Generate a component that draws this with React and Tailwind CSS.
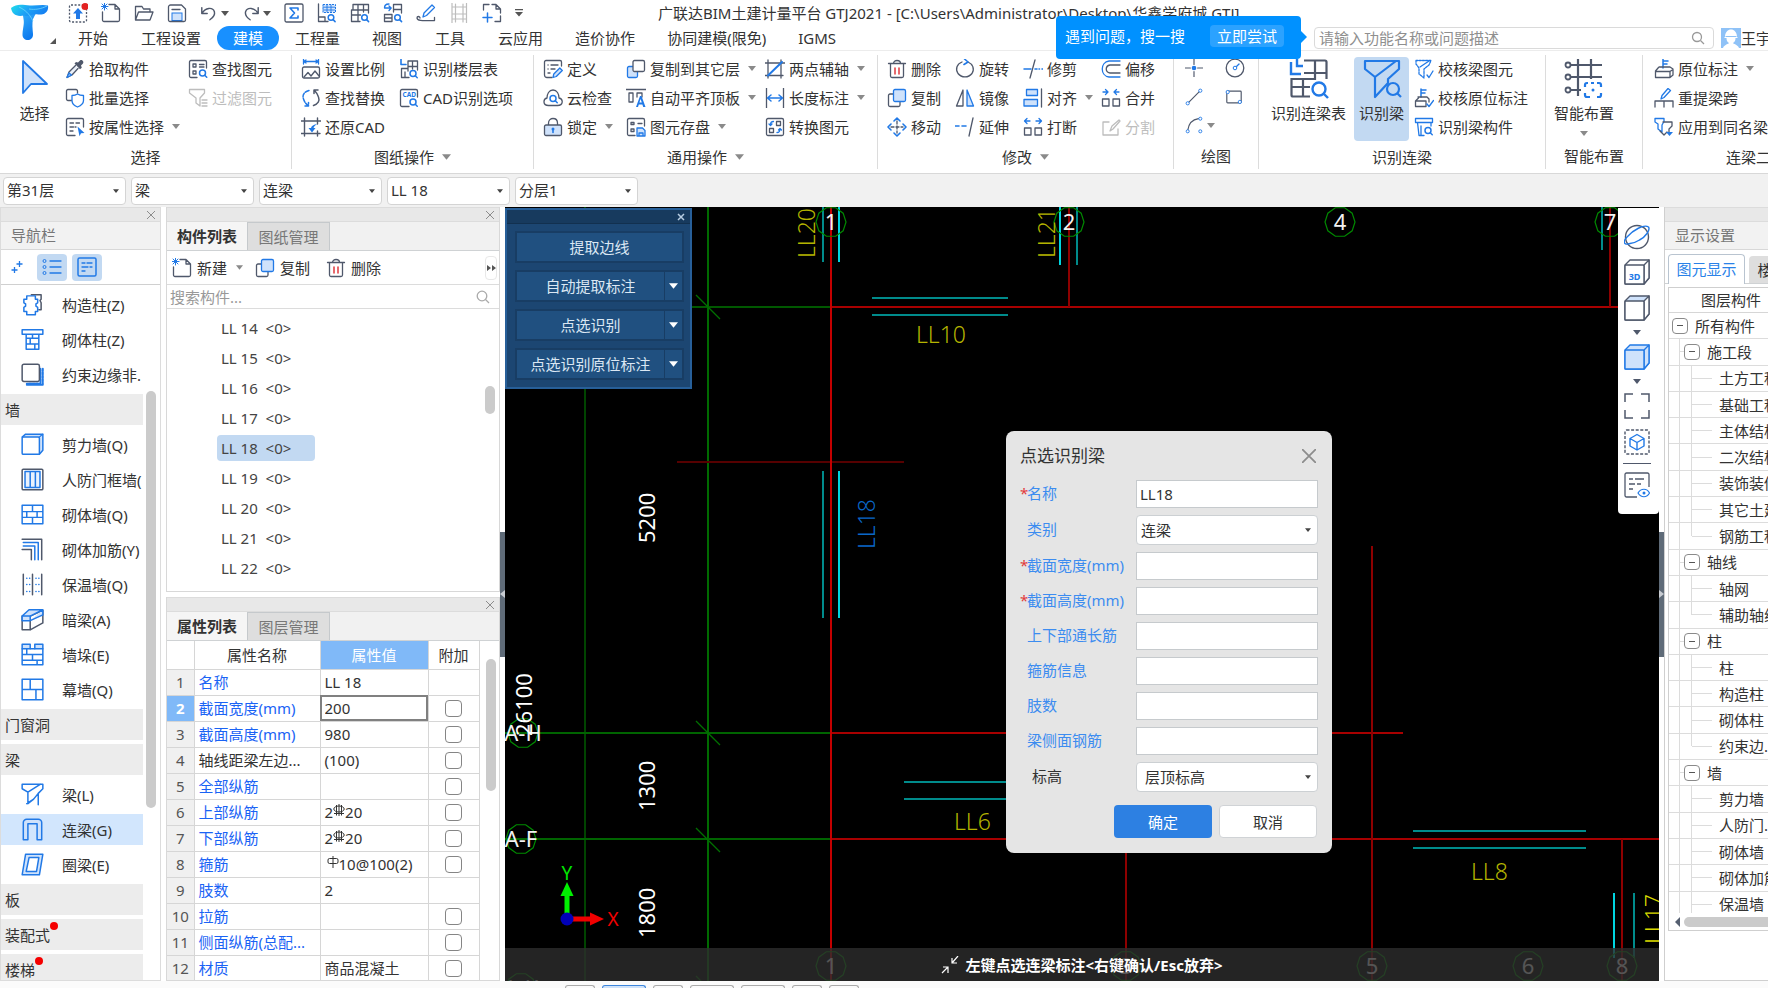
import React from "react";

const G = "#4f586b";
const B = "#2179e6";
const L = "#cfe2fb";
const M = "#bdbdbd";

function P({ d, c = G, f = "none", w = 1.3, dash }) {
  return <path d={d} stroke={c} fill={f} strokeWidth={w} strokeLinecap="round" strokeLinejoin="round" strokeDasharray={dash} />;
}

function Svg({ children, className = "w-5 h-5" }) {
  return (
    <svg viewBox="0 0 20 20" className={"shrink-0 " + className} fill="none" aria-hidden="true">
      {children}
    </svg>
  );
}

function Lens({ x = 14, y = 14, r = 3, w = 1.5 }) {
  return (
    <>
      <circle cx={x} cy={y} r={r} stroke={B} strokeWidth={w} fill="white" />
      <P d={`M${x + r * 0.75} ${y + r * 0.75}l2 2`} c={B} w={w} />
    </>
  );
}

function Caret({ className = "w-2 h-[5px]", color = "#8a8a8a" }) {
  return (
    <svg viewBox="0 0 8 5" className={"shrink-0 " + className} aria-hidden="true">
      <path d="M0 0h8L4 5z" fill={color} />
    </svg>
  );
}

const icons = {
  upload: (
    <>
      <rect x="1.500" y="2" width="17" height="17" rx="1.500" stroke={G} strokeWidth="1.300" strokeDasharray="2 1.600" />
      <path d="M10 5l5 5.500h-3V16H8v-5.500H5z" fill={B} />
      <circle cx="17" cy="3.500" r="3.500" fill="#e32222" />
    </>
  ),
  newDoc: (
    <>
      <P d="M8 1.500h6l4.500 4.500v11a1.500 1.500 0 0 1-1.500 1.500H3A1.500 1.500 0 0 1 1.500 17V9M14 1.500V6h4.500" />
      <P d="M3.500 0v7M0 3.500h7M1 1l5 5M6 1L1 6" c={B} w={1} />
    </>
  ),
  open: (
    <>
      <P d="M1.500 17V3.500H8l1.500 2.500H16v3M1.500 17l3-8H19l-3 8z" />
    </>
  ),
  save: (
    <>
      <rect x="5" y="10" width="10" height="7.500" fill={L} stroke={B} />
      <P d="M3.500 2h11L18.500 6v11a1.500 1.500 0 0 1-1.500 1.500H3A1.500 1.500 0 0 1 1.500 17V4a2 2 0 0 1 2-2zM5 6.500h8" />
    </>
  ),
  undo: <P d="M2 4v6.500h6M2.500 10C6 4 14 3 16 8.500c1 4-2 7-5 9" w={1.6} />,
  redo: <P d="M18 4v6.500h-6M17.500 10C14 4 6 3 4 8.500c-1 4 2 7 5 9" w={1.6} />,
  sum: (
    <>
      <rect x="1" y="1" width="18" height="18" rx="1.500" stroke={G} strokeWidth="1.300" />
      <P d="M14 7V5H6l4.500 5L6 15h8v-2" c={B} w={1.6} />
    </>
  ),
  tableFind: (
    <>
      <P d="M1.500 1v17.500H11M1.500 14H8v4" />
      <rect x="6" y="1.500" width="12.500" height="8" stroke={B} fill={L} strokeDasharray="2 1" />
      <P d="M6 4.200h12M6 7h12M10 2v7M14 2v7" c={B} w={0.9} />
      <Lens x={14} y={14.500} r={2.800} />
    </>
  ),
  gridFind: (
    <>
      <P d="M3 1.500h15.500V10M3 1.500V7H1.500v11.500H10M1.500 12h9M3 7h15.500M8 1.500v17M13.500 1.500V9" />
      <Lens x={14.500} y={14.500} r={2.800} />
    </>
  ),
  blocksFind: (
    <>
      <P d="M10.500 1.500h8V10M10.500 1.500V9M10.500 6.500h8M1.500 18.500h7.500M1.500 18.500v-7H9v7M1.500 15H9" />
      <P d="M6 1C2 1 1.500 3 1.500 5H8M6 3L8.200 5 6 7.500" c={B} />
      <Lens x={14.500} y={14.500} r={2.800} />
    </>
  ),
  penLine: (
    <>
      <P d="M1 15c0-2 3-2 3 0M1 15c0 3.500 8 2.500 17.500 2.500v-3" />
      <P d="M7 14l1-4 8-8 2.500 2.500-8 8z" c={B} />
    </>
  ),
  cols: (
    <>
      <P d="M3 0v20M6.500 1v18M14 1v18M17.500 0v20M3 4h14.500M3 11h14.500M3 16h14.500" c={M} w={1.200} />
    </>
  ),
  pageAdd: (
    <>
      <P d="M1.500 7V1.500H7M10 1.500h4L18.500 6v4M14 1.500V6h4.500M18.500 13v5.500H13" />
      <P d="M5.500 10v9M1 14.500h9" c={B} w={1.500} />
    </>
  ),
  pipette: (
    <>
      <path d="M11 3l2 .5L15 1.500c1.500-1.500 4.500 1 3 3L16 6.500l.8 2.200-1.800 1.500L9.500 4.500z" fill={G} />
      <P d="M10.500 6.500L4 13l-2 5.500L7 16l6-6.500" f="#e9eff8" />
      <P d="M4 14l-2 4.500L6.500 16z" c={B} f={L} />
    </>
  ),
  batch: (
    <>
      <P d="M7 12.500H3A1.500 1.500 0 0 1 1.500 11V3A1.500 1.500 0 0 1 3 1.500h8A1.500 1.500 0 0 1 12.500 3v2" />
      <P d="M7 7.500c2 0 4-.5 5.500-1.500 1.500 1 3.500 1.500 6 1.500v5c0 4-3.500 5.500-6 6.500-2.500-1-5.500-2.500-5.500-6.500z" c={B} f="white" />
    </>
  ),
  attrSelect: (
    <>
      <P d="M10 18.500H3A1.500 1.500 0 0 1 1.500 17V3A1.500 1.500 0 0 1 3 1.500h14A1.500 1.500 0 0 1 18.500 3v7" />
      <P d="M5 6h4M11 6h4.500M5 10h6M5 14h3" dash="3.500 1.500" />
      <path d="M12.500 9.500l7 6.500-3.500.3-1.500 3z" fill={B} />
    </>
  ),
  findEl: (
    <>
      <P d="M9 18.500H3A1.500 1.500 0 0 1 1.500 17V3A1.500 1.500 0 0 1 3 1.500h14A1.500 1.500 0 0 1 18.500 3v6" />
      <P d="M5 5h3v3H5zM5 12h3v3H5zM11.500 5.500H16M11.500 8H16" />
      <Lens x={14.500} y={14} />
    </>
  ),
  filter: (
    <>
      <P d="M1.500 1.500h15V5L12 10v8l-4-3v-5L1.500 5zM14 12h5M14 15h5M14 18h5" c={M} />
    </>
  ),
  scale: (
    <>
      <P d="M2.500 2.500h15M2.500 0v5M17.500 0v5M5 1L2.500 2.500 5 4M15 1l2.500 1.500L15 4" c={B} />
      <rect x="1.500" y="8" width="17" height="11" rx="1.500" stroke={G} strokeWidth="1.300" />
      <P d="M3 18l4-4.500 3 3.500 4-5 4 5" />
    </>
  ),
  floorFind: (
    <>
      <P d="M2 0v5.500h5" c={B} w={1.600} />
      <P d="M9 2h9.500v9M9 2v10M2.500 10.500v8H10M2.500 18.500V9.500H9M9 7.500h9.500M13.500 2v8M6 13v5" />
      <Lens x={14} y={14.500} />
    </>
  ),
  swap: (
    <>
      <P d="M8 2.500C3 4 1 7 2.500 11c.8 2.500 2 4.500 4.500 6.500M4 18h3.500v-3.500" c={B} w={1.500} dash="4 1.500" />
      <P d="M12.500 17.500C17 16 19 13 17.500 9c-.8-2.500-2-4.500-4-6.500M17 2h-4v3.500" w={1.500} />
    </>
  ),
  cad: (
    <>
      <P d="M10 18.500H3A1.500 1.500 0 0 1 1.500 17V3A1.500 1.500 0 0 1 3 1.500h14A1.500 1.500 0 0 1 18.500 3v6" />
      <text x="3.500" y="9" fontSize="6.500" fontWeight="bold" fill={B} fontFamily="Noto Sans">CAD</text>
      <Lens x={14} y={14} />
    </>
  ),
  restore: (
    <>
      <P d="M0 4h20M3.500 1v18M16.500 1v6M0 16.500h19M16.500 14v5" w={1.400} />
      <path d="M16.500 7c-4 .5-6 2-6.500 4H7.500l3.500 4.500 3.500-4.500h-2c.5-2 2-3 4-4z" fill={B} />
    </>
  ),
  define: (
    <>
      <P d="M9 18.500H4A2.500 2.500 0 0 1 1.500 16V3A1.500 1.500 0 0 1 3 1.500h14A1.500 1.500 0 0 1 18.500 3v4M8 6h7M8 10h4M5 6h.1M5 10h.1M5 14h2" />
      <P d="M10 18.500l.8-3.500 6-6 2.500 2.500-6 6z" c={B} f={L} />
    </>
  ),
  cloud: (
    <>
      <P d="M5.500 17.500C-.5 17.500 0 11 4 10c0-4 2-8 6-8s6 4 6 8c4.500 1 4.500 7.500-1.500 7.500z" />
      <Lens x={10} y={10.500} r={3} />
    </>
  ),
  lock: (
    <>
      <P d="M5.500 8V6c0-6 9-6 9 0v2" />
      <rect x="1.500" y="8" width="17" height="10.500" rx="1.500" stroke={G} strokeWidth="1.300" fill={L} />
      <circle cx="10" cy="12" r="1.500" fill={B} />
      <P d="M10 12v3.500" c={B} w={1.600} />
    </>
  ),
  copyLayer: (
    <>
      <rect x="1.500" y="7.500" width="10" height="11" rx="1.500" fill={L} stroke={B} strokeWidth="1.300" />
      <rect x="7" y="1.500" width="11.500" height="11" rx="1.500" fill="white" stroke={G} strokeWidth="1.300" />
    </>
  ),
  alignTop: (
    <>
      <P d="M0 1.500h20M3 5h4v9H3zM11 9V5h5v4" />
      <path d="M10 19l4-11h1.500l4 11h-2.300l-.8-2.500h-3.600L12 19zm3.400-4.500h2.400L14.600 11z" fill={B} />
    </>
  ),
  store: (
    <>
      <P d="M9 18.500H3A1.500 1.500 0 0 1 1.500 17V3A1.500 1.500 0 0 1 3 1.500h14A1.500 1.500 0 0 1 18.500 3v6M5 5.500h3v2H5zM5 12h3v2.500H5zM12 6.500h4" />
      <P d="M11 11h5.500l2.500 2.500V19h-8zM13 19v-3h4v3" c={B} f={L} />
    </>
  ),
  axis2: (
    <>
      <P d="M3 1v18M16 1v18M0 4h20M0 16.500h18" />
      <P d="M3 16.500L17 3" c={B} w={2} />
    </>
  ),
  dim: (
    <>
      <P d="M1.500 0v20M18.500 0v20" />
      <P d="M3 10h14M6 7l-3.500 3L6 13M14 7l3.500 3-3.500 3" c={B} w={1.500} />
    </>
  ),
  convert: (
    <>
      <rect x="1.500" y="1.500" width="17" height="17" rx="1.500" stroke={G} strokeWidth="1.300" />
      <P d="M11.500 4.500h4v4h-4zM4.500 11.500h4v4h-4z" />
      <P d="M8.500 4.500c-2 0-3 1-3 3.500M4 7l1.500 1.500L7 7M12 15.500c2 0 3-1 3-3.500M13.500 13l1.500-1.500 1.500 1.500" c={B} />
    </>
  ),
  trash: (
    <>
      <P d="M1.500 4.500h17M6.500 4.500c0-4 7-4 7 0M3.500 4.500V17A1.500 1.500 0 0 0 5 18.500h10a1.500 1.500 0 0 0 1.500-1.500V4.500" />
      <P d="M8 9v6M12 9v6" c="#e0393e" w={1.500} />
    </>
  ),
  rotate: (
    <>
      <P d="M7 3C2 5 0 10 3 14.500c3.500 4.500 10.500 4.500 14 0 3-5 .5-9.500-4-11.500" />
      <P d="M9.500 0L13 3l-4 2.500" c={B} w={1.600} />
    </>
  ),
  trim: (
    <>
      <P d="M12 1L7 19" />
      <P d="M12 10h2M16 10h.5M19 10h.5" c={B} w={1.600} />
      <P d="M1 10h7" c={B} w={1.500} />
    </>
  ),
  offset: (
    <>
      <P d="M19 2H8c-9 1-9 15 0 16h11" c={B} />
      <P d="M19 6H9c-5 1-5 7 0 8h10" />
    </>
  ),
  copy: (
    <>
      <P d="M6 6H3a1.500 1.500 0 0 0-1.500 1.500V17A1.500 1.500 0 0 0 3 18.500h8.500A1.500 1.500 0 0 0 13 17v-3" />
      <rect x="6.500" y="1.500" width="12" height="12" rx="1.500" fill={L} stroke={B} strokeWidth="1.300" />
    </>
  ),
  mirror: (
    <>
      <P d="M8 2v16H1.500z" />
      <P d="M12 2v16h6.500z" c={B} f={L} />
    </>
  ),
  align: (
    <>
      <P d="M3.500 1.500h11v6h-11zM1 11.500h13.500v6.500H1z" c={B} f={L} />
      <P d="M18.500 1v18" />
    </>
  ),
  merge: (
    <>
      <P d="M1.500 11H8v7H1.500zM12 11h6.500v7H12z" />
      <P d="M2 4h4M4.500 1.500L7 4 4.500 6.500M18 4h-4M15.500 1.500L13 4l2.500 2.500" c={B} />
    </>
  ),
  breakIt: (
    <>
      <P d="M1.500 11H8v7H1.500zM12 11h6.500v7H12z" />
      <P d="M2 4h5M4 1.500L1.500 4 4 6.500M18 4h-5M16 1.500L18.500 4 16 6.500" c={B} />
    </>
  ),
  move: (
    <>
      <P d="M10 4v12M4 10h12" dash="3 2" />
      <P d="M7 4l3-3 3 3M7 16l3 3 3-3M4 7l-3 3 3 3M16 7l3 3-3 3" c={B} w={1.600} />
    </>
  ),
  extend: (
    <>
      <P d="M0 9h4M7 9h4" c={B} w={1.600} />
      <P d="M18 1l-4 18" />
    </>
  ),
  split: (
    <>
      <P d="M8 5H2v13h15v-6M9 14l2-5 7-6 1 1-7 8z" c={M} />
    </>
  ),
  point: (
    <>
      <P d="M10 0v6M10 14v6M0 10h6M14 10h6" />
      <circle cx="10" cy="10" r="2.600" fill={B} />
    </>
  ),
  circle: (
    <>
      <circle cx="10" cy="10" r="8.800" stroke={G} strokeWidth="1.300" />
      <P d="M10 10l4-4" c={B} />
      <circle cx="10" cy="10" r="1.800" stroke={B} fill="white" />
    </>
  ),
  line: (
    <>
      <P d="M3 17L17 3" />
      <circle cx="3" cy="17" r="1.800" stroke={B} fill="white" />
      <circle cx="17" cy="3" r="1.800" stroke={B} fill="white" />
    </>
  ),
  rect: (
    <>
      <rect x="2" y="3.500" width="16" height="13" rx="1" stroke={G} strokeWidth="1.300" />
      <circle cx="3" cy="4.500" r="1.800" stroke={B} fill="white" />
      <circle cx="16.500" cy="15.500" r="1.800" stroke={B} fill="white" />
    </>
  ),
  arc: (
    <>
      <P d="M3 16C4 9 8 4 15 3" />
      <circle cx="3" cy="17" r="1.700" stroke={B} fill="white" />
      <circle cx="17" cy="3" r="1.700" stroke={B} fill="white" />
      <circle cx="17" cy="17" r="1.700" stroke={B} fill="white" />
    </>
  ),
  checkBeam: (
    <>
      <P d="M2 1.500h15L15 6l-5 4v9l-5-4v-6L2 5z" c={B} dash="2 1.200" />
      <P d="M6 8l9-6M13 16l2 2.500L19 12" c={B} />
    </>
  ),
  checkMark: (
    <>
      <P d="M7 1v8M7 2h5M7 5h4" c={B} w={1.500} />
      <P d="M4 9h9l2 2M1.500 18.500V13l3-3M1.500 13H12v5.500H1.500M15 11v3" />
      <P d="M13 16l2 2.500 4.500-6" c={B} />
    </>
  ),
  beamPart: (
    <>
      <P d="M1.500 1.500h17v4h-17zM3.500 5.500L5 18.500h5M17 5.500V9M7 9v9" c={B} />
      <Lens x={14} y={13.500} />
    </>
  ),
  origMark: (
    <>
      <P d="M9 0v9M9 2h5M9 5h4" c={B} w={1.500} />
      <P d="M5 8h11l3 2v6l-3 2.500H1.500V12l3-3.500M1.500 12.500H16v6M16 12.500l3-2" />
    </>
  ),
  respan: (
    <>
      <P d="M1 19v-6h18v6M10 13v6" />
      <P d="M7 11l1-3.500 6-7 2.500 2-6.500 7z" c={B} />
    </>
  ),
  apply: (
    <>
      <P d="M1 1.500h9v3L8 8v7l-4-3V7L1 5z" c={B} />
      <P d="M9 5h9v4l-3 3v3M6 14l4 4 3-3" />
      <path d="M12 15h7l-3.500 4z" fill={B} />
    </>
  ),
  col1: (
    <>
      <P d="M9 1.500h8.500v4l-1 1 1 2v6h-2" />
      <P d="M5 2.500h7.500v3h2v3l-1.500 1v2l1.500 1V16h-2v3H5v-3H2.500v-3.500l1.500-1v-2l-1.500-1V5.500H5z" c={B} f="white" />
    </>
  ),
  col2: <P d="M1 1.500h18v4H1zM4.500 5.500v13h11v-13M4.500 9h11M4.500 14h11M10 5.500V9M8 9v5M12 14v4.500" c={B} />,
  col3: (
    <>
      <P d="M17 5v13H5M19 5v14H5" c={B} f={L} dash="2 1" w={1.600} />
      <rect x="1" y="1" width="15" height="15" rx="1.500" fill="white" stroke={G} strokeWidth="1.300" />
    </>
  ),
  wall1: (
    <>
      <P d="M1 3.500L4 1h15v14l-3 3.500z" c={B} f={L} />
      <rect x="1" y="3.500" width="15" height="15" rx="1" fill="white" stroke={B} strokeWidth="1.300" />
      <P d="M16 3.500L19 1" c={B} w={1} />
    </>
  ),
  wall2: (
    <>
      <rect x="1" y="1" width="18" height="18" rx="1" stroke={G} strokeWidth="1.300" />
      <P d="M3.500 3v14h13V3zM8 3v14M12.500 3v14" c={B} f="#eaf2fd" />
    </>
  ),
  wall3: <P d="M1 2h18v16H1zM1 7.500h18M1 12.500h18M10 2v5.500M5 7.500v5M14 7.500v5M10 12.500V18" c={B} />,
  wall4: (
    <>
      <P d="M1 1h17v18M1 10h8v9" />
      <P d="M2 4h13v15M2 7h10v12" c={B} />
    </>
  ),
  wall5: (
    <>
      <P d="M2 1v18M10 1v18M18 1v18" />
      <P d="M5 4.500h.1M7.500 4.500h.1M13 4.500h.1M15.500 4.500h.1M5 10h.1M7.500 10h.1M13 10h.1M15.500 10h.1M5 16h.1M7.500 16h.1M13 16h.1M15.500 16h.1" c={B} />
    </>
  ),
  wall6: (
    <>
      <P d="M1 7h7v12H1zM8 7l11-5v11L8 19" />
      <P d="M1 7l6-5.500h12L8 7zM1 7v4h7V7M8 11l11-5V1.500" c={B} f={L} />
    </>
  ),
  wall7: (
    <>
      <P d="M1 1h7v4H1zM12 1h7v4h-7z" c={B} f={L} />
      <P d="M1 5v14h18V5M1 10h18M5 5v5M8 5h4M10 10v5M1 15h18M14 15v4" c={B} />
    </>
  ),
  wall8: <P d="M1 1h18v18H1zM1 10h18M8 1v9M13 10v9" c={B} />,
  beam: <P d="M1 1h18v4l-4 4v10M1 1v4l5 3v10l5-4 4-5M6 8l11-7M5 18l6-4" c={B} />,
  link: (
    <>
      <P d="M2 19V4a3 3 0 0 1 3-3h10a3 3 0 0 1 3 3v15h-4V5H6v14z" c={B} f={L} />
    </>
  ),
  ring: (
    <>
      <P d="M4 1h15l-3 18H1z" c={B} f={L} />
      <P d="M7 4h8.500l-2 12H4.500z" c={B} f="white" />
    </>
  ),
};

function Icon({ n, className }) {
  return <Svg className={className}>{icons[n]}</Svg>;
}

function Tool({ icon, label, caret, off }) {
  return (
    <button className={"flex h-[29px] items-center gap-1 whitespace-nowrap " + (off ? "text-[#bdbdbd]" : "text-[#333]")}>
      <Icon n={icon} className="h-5 w-5" />
      <span>{label}</span>
      {caret && <Caret className="ml-1 h-[5px] w-2" />}
    </button>
  );
}

function Group({ label, caret, width, children }) {
  return (
    <section className={"flex shrink-0 flex-col pt-[3px] " + width}>
      <div className="flex h-[87px]">{children}</div>
      <div className="flex h-[34px] items-center justify-center gap-2 whitespace-nowrap">
        {label}
        {caret && <Caret className="h-[6px] w-[9px]" />}
      </div>
    </section>
  );
}

const Rule = () => <div className="my-1 w-px shrink-0 bg-[#dcdcdc]" />;

const quickA = ["upload", "newDoc", "open", "save"];
const quickB = ["sum", "tableFind", "gridFind", "blocksFind", "penLine", "cols", "pageAdd"];

function Header() {
  return (
    <header className="relative flex h-[51px] shrink-0 border-b border-[#ececec] bg-white">
      <button aria-label="菜单" className="flex w-[60px] shrink-0 items-start pl-[10px] pt-1">
        <svg viewBox="0 0 40 38" className="h-[38px] w-10" aria-hidden="true">
          <defs>
            <linearGradient id="lg1" x1="0" y1="0" x2="1" y2="0.3">
              <stop offset="0" stopColor="#1fe0ea" />
              <stop offset="0.5" stopColor="#1da4f5" />
              <stop offset="1" stopColor="#1682f2" />
            </linearGradient>
            <linearGradient id="lg2" x1="0" y1="0" x2="0.4" y2="1">
              <stop offset="0" stopColor="#37b4fb" />
              <stop offset="1" stopColor="#0c78ee" />
            </linearGradient>
          </defs>
          <path d="M12 5h16l-5 10c-1 5-.5 9 0 15 .5 8-11 8-10.500 0 .5-7 2-10 1-15z" fill="url(#lg2)" />
          <path d="M1 4c6-5 12-3 19-2.500C26 2 32 0 38 1.500c1 7-4 9.500-10 9-6-1-9 3-14 1C6 13 2 10 1 4z" fill="url(#lg1)" />
          <path d="M9 3c6 3 10 6 14 14M37 2c-6 3-12 4-18 3" stroke="#6fd6fb" strokeWidth="0.800" fill="none" />
        </svg>
        <svg viewBox="0 0 6 6" className="mt-[34px] h-[6px] w-[6px] shrink-0" aria-hidden="true">
          <path d="M6 0v6H0z" fill="#555" />
        </svg>
      </button>
      <div className="flex min-w-0 flex-1 flex-col">
        <div className="flex h-[26px] shrink-0 items-center pl-2">
          <div className="flex w-[590px] shrink-0 items-center gap-[13px]">
            {quickA.map((n) => (
              <button key={n} aria-label={n}><Icon n={n} /></button>
            ))}
            {["undo", "redo"].map((n) => (
              <button key={n} aria-label={n} className="flex items-center gap-[3px]">
                <Icon n={n} className="h-[18px] w-[18px]" />
                <Caret color="#555" />
              </button>
            ))}
            {quickB.map((n) => (
              <button key={n} aria-label={n}><Icon n={n} /></button>
            ))}
            <button aria-label="更多">
              <svg viewBox="0 0 8 8" className="h-2 w-2" aria-hidden="true"><path d="M0 0h8v1.200H0zM0 3h8L4 7.500z" fill="#555" /></svg>
            </button>
          </div>
          <h1 className="whitespace-nowrap text-[15px]">广联达BIM土建计量平台 GTJ2021 - [C:\Users\Administrator\Desktop\华鑫学府城.GTJ]</h1>
        </div>
        <div className="flex flex-1 items-center">
          <nav className="flex min-w-0 flex-1 items-center pl-[2px]">
            {["开始", "工程设置", "建模", "工程量", "视图", "工具", "云应用", "造价协作", "协同建模(限免)", "IGMS"].map((t) => (
              <a key={t} href="#" className={"flex h-6 items-center whitespace-nowrap rounded-full px-4 " + (t === "建模" ? "bg-[#1890ff] text-white" : t.length > 2 ? "" : "mr-px")}>{t}</a>
            ))}
          </nav>
          <label className="mr-[7px] flex h-[22px] w-[400px] shrink-0 items-center rounded-sm border border-[#dadada] pl-1 pr-2">
            <input aria-label="搜索功能" placeholder="请输入功能名称或问题描述" className="min-w-0 flex-1 bg-transparent outline-none placeholder:text-[#8f8f8f]" />
            <svg viewBox="0 0 14 14" className="h-[14px] w-[14px]" aria-hidden="true"><circle cx="6" cy="6" r="4.500" stroke="#999" fill="none" strokeWidth="1.300" /><path d="M9.500 9.500L13 13" stroke="#999" strokeWidth="1.300" /></svg>
          </label>
          <button className="flex w-[47px] shrink-0 items-center overflow-hidden whitespace-nowrap">
            <svg viewBox="0 0 20 20" className="h-5 w-5 shrink-0" aria-hidden="true">
              <path d="M0 0h20v20H0z" fill="#8fc2f7" />
              <path d="M4 9c0-10 12-10 12 0l1 1H3zM5.500 10h9c0 3-1 4-2.500 5 0 1 5 1.500 6 5H2c1-3.500 6-4 6-5-1.500-1-2.500-2-2.500-5z" fill="white" />
              <path d="M4.500 8.500h11" stroke="#8fc2f7" />
            </svg>
            <span>王宇</span>
          </button>
        </div>
      </div>
      <div className="absolute right-[467px] top-4 z-20 flex h-[43px] w-[245px] items-center justify-between rounded bg-[#0091ff] pb-1 pl-[9px] pr-[17px] text-white">
        <span>遇到问题，搜一搜</span>
        <button className="flex h-[22px] items-center rounded-sm bg-[#2ba2ff] px-[7px]">立即尝试</button>
        <svg viewBox="0 0 6 12" className="absolute -right-[6px] top-[15px] h-3 w-[6px]" aria-hidden="true"><path d="M0 0l6 6-6 6z" fill="#0091ff" /></svg>
      </div>
    </header>
  );
}

function Ribbon() {
  return (
    <div className="flex h-[123px] shrink-0 overflow-hidden border-b border-[#d8d8d8] bg-white">
      <Group label="选择" width="w-[291px]">
        <button className="flex w-[65px] shrink-0 flex-col items-center gap-2 pt-[5px]">
          <svg viewBox="0 0 28 36" className="ml-1 h-9 w-7" aria-hidden="true"><path d="M2 2v32l8-9h16z" fill={L} stroke={B} strokeWidth="1.800" strokeLinejoin="round" /></svg>
          <span className="ml-1">选择</span>
        </button>
        <div className="w-[123px] shrink-0">
          <Tool icon="pipette" label="拾取构件" />
          <Tool icon="batch" label="批量选择" />
          <Tool icon="attrSelect" label="按属性选择" caret />
        </div>
        <div>
          <Tool icon="findEl" label="查找图元" />
          <Tool icon="filter" label="过滤图元" off />
        </div>
      </Group>
      <Rule />
      <Group label="图纸操作" caret width="w-[241px]">
        <div className="w-[107px] shrink-0 pl-[9px]">
          <Tool icon="scale" label="设置比例" />
          <Tool icon="swap" label="查找替换" />
          <Tool icon="restore" label="还原CAD" />
        </div>
        <div>
          <Tool icon="floorFind" label="识别楼层表" />
          <Tool icon="cad" label="CAD识别选项" />
        </div>
      </Group>
      <Rule />
      <Group label="通用操作" caret width="w-[343px]">
        <div className="w-[92px] shrink-0 pl-[9px]">
          <Tool icon="define" label="定义" />
          <Tool icon="cloud" label="云检查" />
          <Tool icon="lock" label="锁定" caret />
        </div>
        <div className="w-[139px] shrink-0">
          <Tool icon="copyLayer" label="复制到其它层" caret />
          <Tool icon="alignTop" label="自动平齐顶板" caret />
          <Tool icon="store" label="图元存盘" caret />
        </div>
        <div>
          <Tool icon="axis2" label="两点辅轴" caret />
          <Tool icon="dim" label="长度标注" caret />
          <Tool icon="convert" label="转换图元" />
        </div>
      </Group>
      <Rule />
      <Group label="修改" caret width="w-[295px]">
        <div className="w-[77px] shrink-0 pl-[9px]">
          <Tool icon="trash" label="删除" />
          <Tool icon="copy" label="复制" />
          <Tool icon="move" label="移动" />
        </div>
        <div className="w-[68px] shrink-0">
          <Tool icon="rotate" label="旋转" />
          <Tool icon="mirror" label="镜像" />
          <Tool icon="extend" label="延伸" />
        </div>
        <div className="w-[78px] shrink-0">
          <Tool icon="trim" label="修剪" />
          <Tool icon="align" label="对齐" caret />
          <Tool icon="breakIt" label="打断" />
        </div>
        <div>
          <Tool icon="offset" label="偏移" />
          <Tool icon="merge" label="合并" />
          <Tool icon="split" label="分割" off />
        </div>
      </Group>
      <Rule />
      <Group label="绘图" width="w-[84px]">
        <div className="grid h-full grid-cols-[40px_20px] grid-rows-3 items-center pl-[11px]">
          <button aria-label="点"><Icon n="point" className="h-[18px] w-[18px]" /></button>
          <button aria-label="圆"><Icon n="circle" /></button>
          <button aria-label="直线"><Icon n="line" className="h-[18px] w-[18px]" /></button>
          <button aria-label="矩形"><Icon n="rect" className="h-[18px] w-[18px]" /></button>
          <button aria-label="弧" className="flex items-center gap-1"><Icon n="arc" className="h-[18px] w-[18px]" /><Caret /></button>
        </div>
      </Group>
      <Rule />
      <Group label="识别连梁" width="w-[286px]">
        <button className="ml-1 flex w-[91px] shrink-0 flex-col items-center gap-1 pt-[5px]">
          <svg viewBox="0 0 40 40" className="h-10 w-10" fill="none" aria-hidden="true">
            <path d="M2 3v12h10M8 0v7h6" stroke={B} strokeWidth="2.400" />
            <path d="M15 1.500h21a1.500 1.500 0 0 1 1.500 1.500v17M15 14h23M26 1v19H2.500v16a1.500 1.500 0 0 0 1.500 1.500h17M2 28h19M14 20v17" stroke={G} strokeWidth="2.200" />
            <circle cx="30" cy="30" r="6.500" stroke={B} strokeWidth="2.400" fill="white" />
            <path d="M35 35l4 4" stroke={B} strokeWidth="2.400" />
          </svg>
          <span className="whitespace-nowrap">识别连梁表</span>
        </button>
        <button className="mt-[3px] flex h-[84px] w-[55px] shrink-0 flex-col items-center gap-1 rounded bg-[#c2d9f2] pt-[2px]">
          <svg viewBox="0 0 40 40" className="h-10 w-10" fill="none" aria-hidden="true">
            <path d="M3 2h34v8L26 20v4l-13 14V18L3 10zM13 18L34 2" stroke={B} strokeWidth="2.200" strokeLinejoin="round" />
            <circle cx="31" cy="30" r="6" stroke={B} strokeWidth="2.200" fill="#c2d9f2" />
            <path d="M35.500 34.500L39 38" stroke={B} strokeWidth="2.200" />
          </svg>
          <span>识别梁</span>
        </button>
        <div className="pl-[5px]">
          <Tool icon="checkBeam" label="校核梁图元" />
          <Tool icon="checkMark" label="校核原位标注" />
          <Tool icon="beamPart" label="识别梁构件" />
        </div>
      </Group>
      <Rule />
      <Group label="智能布置" width="w-[96px]">
        <button className="ml-2 flex flex-col items-center gap-1 pt-[5px]">
          <svg viewBox="0 0 40 40" className="h-10 w-10" fill="none" aria-hidden="true">
            <path d="M5 6h33M5 18h33M5 31h12M14 0v37M27 0v20" stroke={G} strokeWidth="2.200" />
            <circle cx="4" cy="6" r="2.500" fill="white" stroke={G} strokeWidth="1.800" />
            <circle cx="4" cy="18" r="2.500" fill="white" stroke={G} strokeWidth="1.800" />
            <circle cx="4" cy="31" r="2.500" fill="white" stroke={G} strokeWidth="1.800" />
            <path d="M24 24h-1a2 2 0 0 0-2 2v2M33 24h2a2 2 0 0 1 2 2v2M37 34v2a2 2 0 0 1-2 2h-2M26 38h-3a2 2 0 0 1-2-2v-2M27 24h3" stroke={B} strokeWidth="2.200" />
            <circle cx="29" cy="31" r="1.500" fill={B} />
          </svg>
          <span className="mb-1 whitespace-nowrap">智能布置</span>
          <Caret />
        </button>
      </Group>
      <Rule />
      <Group label="连梁二次编辑" width="w-[256px]">
        <div className="pl-[11px]">
          <Tool icon="origMark" label="原位标注" caret />
          <Tool icon="respan" label="重提梁跨" />
          <Tool icon="apply" label="应用到同名梁" />
        </div>
      </Group>
    </div>
  );
}

function Pick({ options, label, className }) {
  return (
    <div className={"relative shrink-0 " + className}>
      <select aria-label={label} className="h-full w-full appearance-none rounded border border-[#d4d4d4] bg-white pb-[2px] pl-[3px] pr-5 outline-none">
        {options.map((o) => <option key={o}>{o}</option>)}
      </select>
      <Caret className="pointer-events-none absolute right-[7px] top-[12px] h-1 w-[6px]" color="#444" />
    </div>
  );
}

function Close({ className = "h-2 w-2" }) {
  return <svg viewBox="0 0 8 8" className={className} aria-hidden="true"><path d="M0 0l8 8M8 0L0 8" stroke="#8c8c8c" strokeWidth="1" /></svg>;
}

function Strip() {
  return (
    <div className="flex h-[15px] shrink-0 items-center justify-end border-b border-t border-[#dcdcdc] bg-[#e8e8e8] pr-[5px]">
      <button aria-label="关闭"><Close /></button>
    </div>
  );
}

const nav = [
  ["col1", "构造柱(Z)"], ["col2", "砌体柱(Z)"], ["col3", "约束边缘非."], ["", "墙"],
  ["wall1", "剪力墙(Q)"], ["wall2", "人防门框墙("], ["wall3", "砌体墙(Q)"], ["wall4", "砌体加筋(Y)"],
  ["wall5", "保温墙(Q)"], ["wall6", "暗梁(A)"], ["wall7", "墙垛(E)"], ["wall8", "幕墙(Q)"],
  ["", "门窗洞"], ["", "梁"], ["beam", "梁(L)"], ["link", "连梁(G)", "sel"], ["ring", "圈梁(E)"],
  ["", "板"], ["", "装配式", "dot"], ["", "楼梯", "dot"],
];

function NavPanel() {
  return (
    <aside className="flex w-[161px] shrink-0 flex-col border-x border-b border-[#dcdcdc] bg-white">
      <Strip />
      <h2 className="flex h-7 shrink-0 items-center border-b border-[#d8d8d8] bg-[#f2f2f2] pb-px pl-[10px] text-[#777]">导航栏</h2>
      <div className="flex h-[35px] shrink-0 items-center border-b border-[#d0d0d0] pl-[10px]">
        <button aria-label="添加" className="mr-[14px]">
          <svg viewBox="0 0 12 14" className="h-[14px] w-3" aria-hidden="true"><path d="M8.500 1v6M5.500 4h6M3.500 7v6M.5 10h6" stroke={B} strokeWidth="1.300" /></svg>
        </button>
        <button aria-label="列表" className="mr-[5px] flex h-[27px] w-[30px] items-center justify-center rounded bg-[#c2d9f2]">
          <Svg><P d="M8 4h11M8 10h11M8 16h11" c={B} /><circle cx="2.500" cy="4" r="1.500" stroke={B} /><circle cx="2.500" cy="10" r="1.500" stroke={B} /><circle cx="2.500" cy="16" r="1.500" stroke={B} /></Svg>
        </button>
        <button aria-label="详情" className="flex h-[27px] w-[30px] items-center justify-center rounded bg-[#c2d9f2]">
          <Svg><rect x="1" y="1" width="18" height="18" rx="1.500" stroke={B} strokeWidth="1.500" /><P d="M5 6h3M10 6h5M5 10h6M13 10h2M5 14h3" c={B} /></Svg>
        </button>
      </div>
      <div className="flex min-h-0 flex-1 overflow-hidden pt-1">
        <ul className="flex w-[142px] shrink-0 flex-col gap-1">
          {nav.map(([ic, t, s], i) => (
            <li key={i} className="h-[31px] shrink-0">
              {ic ? (
                <a href="#" className={"flex h-full items-center gap-[18px] overflow-hidden whitespace-nowrap pl-5 " + (s ? "bg-[#d2e6fd]" : "")}>
                  <Icon n={ic} className="h-[23px] w-[23px]" />
                  <span>{t}</span>
                </a>
              ) : (
                <button className="flex h-full w-full items-center bg-[#ececec] pl-1">
                  {t}
                  {s && <span className="mb-[18px] h-2 w-2 rounded-full bg-[#f50000]" />}
                </button>
              )}
            </li>
          ))}
        </ul>
        <div className="ml-[3px] mt-[102px] h-[417px] w-[10px] rounded-full bg-[#cbcbcb]" />
      </div>
    </aside>
  );
}

function Tabs({ a, b }) {
  return (
    <div className="flex h-[29px] shrink-0 border-b border-[#cfd2d4] bg-[#f1f1f1]" role="tablist">
      <button role="tab" aria-selected="true" className="w-[81px] border-r border-[#c5c9cc] bg-[#f5f5f5] font-bold">{a}</button>
      <button role="tab" aria-selected="false" className="w-[82px] border-r border-t border-[#c5c9cc] bg-[#dedede] text-[#777]">{b}</button>
    </div>
  );
}

function ListPanel() {
  return (
    <section className="flex h-[385px] shrink-0 flex-col border-x border-b border-[#d8d8d8] bg-white">
      <Strip />
      <Tabs a="构件列表" b="图纸管理" />
      <div className="flex h-[34px] shrink-0 items-center border-b border-[#dcdcdc] pl-[5px]">
        <button className="flex items-center gap-[5px]"><Icon n="newDoc" />新建<Caret className="ml-1 h-[5px] w-[7px]" /></button>
        <button className="ml-3 flex items-center gap-[5px]"><Icon n="copy" />复制</button>
        <button className="ml-4 flex items-center gap-[5px]"><Icon n="trash" className="h-5 w-5" />删除</button>
        <button aria-label="展开" className="ml-auto mr-[2px] flex h-6 w-3 items-center justify-center rounded border border-[#e8e8e8]">
          <svg viewBox="0 0 9 6" className="h-[6px] w-[9px] shrink-0" aria-hidden="true"><path d="M0 0l4 3-4 3zM5 0l4 3-4 3z" fill="#555" /></svg>
        </button>
      </div>
      <label className="flex h-6 shrink-0 items-center border-b border-[#dcdcdc] pl-[3px] pr-[9px]">
        <input aria-label="搜索构件" placeholder="搜索构件..." className="min-w-0 flex-1 outline-none placeholder:text-[#999]" />
        <svg viewBox="0 0 14 14" className="h-[14px] w-[14px]" aria-hidden="true"><circle cx="6" cy="6" r="4.800" stroke="#aaa" fill="none" strokeWidth="1.300" /><path d="M9.500 9.500L13 13" stroke="#aaa" strokeWidth="1.300" /></svg>
      </label>
      <div className="flex min-h-0 flex-1 justify-between pr-1 pt-1">
        <ul className="pl-[50px]">
          {[14, 15, 16, 17, 18, 19, 20, 21, 22].map((n) => (
            <li key={n} className="flex h-[30px] items-center">
              <a href="#" className={"flex h-[26px] w-[98px] items-center whitespace-pre rounded pl-1 text-[#444] " + (n === 18 ? "bg-[#c2d9f2]" : "")}>{`LL ${n}  <0>`}</a>
            </li>
          ))}
        </ul>
        <div className="mt-[73px] h-7 w-[10px] rounded-full bg-[#cbcbcb]" />
      </div>
    </section>
  );
}

const bars3 = (
  <svg viewBox="0 0 12 12" className="mb-1 h-3 w-3" aria-label="Φ" role="img"><path d="M6 0v12M3.500 1v10.500M8.500 1v10.500M1 9.500h10" stroke="#333" fill="none" strokeWidth="1" /><ellipse cx="6" cy="5" rx="5.200" ry="3" stroke="#333" fill="none" /></svg>
);
const bars1 = (
  <svg viewBox="0 0 12 12" className="mb-1 ml-[2px] h-3 w-3" aria-label="Φ" role="img"><path d="M6 0v12" stroke="#333" /><rect x="1" y="2.500" width="10" height="5" rx="1.500" stroke="#333" fill="none" /></svg>
);

const props = [
  ["名称", "LL 18", 0], ["截面宽度(mm)", "200", 1], ["截面高度(mm)", "980", 1], ["轴线距梁左边...", "(100)", 1],
  ["全部纵筋", "", 1], ["上部纵筋", <>2{bars3}20</>, 1], ["下部纵筋", <>2{bars3}20</>, 1], ["箍筋", <>{bars1}10@100(2)</>, 1],
  ["肢数", "2", 0], ["拉筋", "", 1], ["侧面纵筋(总配...", "", 1], ["材质", "商品混凝土", 1],
];

function PropPanel() {
  return (
    <section className="mt-[5px] flex min-h-0 flex-1 flex-col border-x border-b border-[#d8d8d8] bg-white">
      <Strip />
      <Tabs a="属性列表" b="图层管理" />
      <div className="flex min-h-0 flex-1 items-start overflow-hidden">
        <table className="w-[312px] table-fixed border-collapse leading-5">
          <colgroup><col className="w-[27px]" /><col className="w-[126px]" /><col className="w-[108px]" /><col className="w-[51px]" /></colgroup>
          <thead>
            <tr className="h-7 [&>th]:border-b [&>th]:border-r [&>th]:border-[#d6d6d6] [&>th]:p-0 [&>th]:font-normal">
              <th aria-label="序号" /><th>属性名称</th><th className="bg-[#80b9f8] text-white">属性值</th><th>附加</th>
            </tr>
          </thead>
          <tbody>
            {props.map(([k, v, c], i) => (
              <tr key={i} className="h-[26px] [&>td]:border-b [&>td]:border-r [&>td]:border-[#d6d6d6]">
                <td className={"p-0 text-center " + (i === 1 ? "bg-[#80b9f8] font-bold text-white" : "bg-[#f0f0f0] text-[#555]")}>{i + 1}</td>
                <td className={"overflow-hidden whitespace-nowrap p-0 pl-1 " + (i === 3 ? "" : "text-[#1a63f5]")}>{k}</td>
                <td className={"whitespace-nowrap p-0 pl-1 " + (i === 1 ? "outline-2 -outline-offset-2 outline-[#808080]" : "")}>
                  {i === 1 ? <input aria-label={k} defaultValue={v} className="block h-5 w-[98px] outline-none" /> : <span className="flex h-5 items-center">{v}</span>}
                </td>
                <td className="p-0">
                  {c ? <input type="checkbox" aria-label={k + "附加"} className="mx-auto block h-[17px] w-[17px] appearance-none rounded-sm border border-[#858585] bg-white" /> : null}
                </td>
              </tr>
            ))}
          </tbody>
        </table>
        <div className="ml-[6px] mt-[18px] h-[132px] w-[10px] rounded-full bg-[#cbcbcb]" />
      </div>
    </section>
  );
}

function Splitter({ right }) {
  return (
    <div className="flex w-[5px] shrink-0 items-center bg-white">
      <button aria-label="折叠" className="flex h-[125px] w-[5px] items-center bg-[#5f6b78]">
        <svg viewBox="0 0 5 8" className="h-2 w-[5px]" aria-hidden="true"><path d={right ? "M0 0l5 4-5 4z" : "M5 0L0 4l5 4z"} fill="#c8ccd2" /></svg>
      </button>
    </div>
  );
}

const DR = "#8e0000", RD = "#c40000", GR = "#006400", CY = "#008b8b", CB = "#00d5e0", YL = "#b4b400";

const lines = [
  [585, 207, 585, 981, "#004400"], [708, 207, 708, 981, "#006a00"],
  [505, 307, 831, 307, "#005800"], [505, 733, 831, 733, GR], [505, 839, 831, 839, GR],
  [831, 307, 1659, 307, "#a80000"], [831, 733, 1403, 733, "#a80000"], [831, 839, 1659, 839, "#a80000"],
  [677, 462, 904, 462, "#560000"], [831, 207, 831, 981, RD], [1069, 207, 1069, 307, DR],
  [1610, 207, 1610, 307, DR], [1372, 546, 1372, 981, DR], [1622, 839, 1622, 981, DR], [1126, 839, 1126, 981, DR],
  [823, 207, 823, 262, CY], [839, 207, 839, 262, CB], [1060, 207, 1060, 265, CB], [1077, 207, 1077, 265, CY],
  [1602, 207, 1602, 250, CY], [823, 471, 823, 618, CY], [839, 471, 839, 618, CB],
  [872, 298, 1008, 298, CY], [872, 315, 1008, 315, CY], [904, 782, 1010, 782, CY], [904, 799, 1010, 799, CY],
  [1413, 831, 1586, 831, CY], [1413, 848, 1586, 848, CY], [1614, 893, 1614, 958, CB], [1634, 893, 1634, 958, CY],
];

const ngon = Array.from({ length: 10 }, (_, i) => {
  const a = (i * Math.PI) / 5;
  return `${(15 * Math.cos(a)).toFixed(2)},${(15 * Math.sin(a)).toFixed(2)}`;
}).join(" ");

const marks = [
  [831, 222, "1"], [1069, 222, "2"], [1340, 222, "4"], [1610, 222, "7"],
  [831, 966, "1"], [1126, 966, "3"], [1372, 966, "5"], [1528, 966, "6"], [1622, 966, "8"],
  [523, 733, "A-H"], [521, 839, "A-F"], [521, 988, "A-K"],
];

const CAD_FONT = "'Liberation Sans Narrow', 'Noto Sans', sans-serif";

const tags = [
  [916, 343, "LL10", 0, YL], [954, 830, "LL6", 0, YL], [1471, 880, "LL8", 0, YL],
  [815, 258, "LL20", 1, YL], [1055, 258, "LL21", 1, YL], [875, 549, "LL18", 1, "#0a68c8"], [1662, 944, "LL17", 1, "#d8d800"],
];

const dims = [[655, 543, "5200"], [655, 811, "1300"], [655, 938, "1800"], [532, 736, "26100"]];

function Drawing() {
  return (
    <svg viewBox="505 207 1154 774" preserveAspectRatio="xMinYMin slice" className="block h-full w-full" role="img" aria-label="图纸">
      {lines.map(([x1, y1, x2, y2, c], i) => (
        <line key={i} x1={x1} y1={y1} x2={x2} y2={y2} stroke={c} strokeWidth="2" shapeRendering="crispEdges" />
      ))}
      {[[696, 295], [696, 721], [696, 828], [696, 976]].map(([x, y]) => (
        <path key={y} d={`M${x} ${y}l24 24`} stroke="#007000" strokeWidth="1.200" />
      ))}
      {marks.map(([x, y, t], i) => (
        <g key={i}>
          <polygon points={ngon} transform={`translate(${x} ${y})`} fill="none" stroke="#008a00" strokeWidth="1.200" />
          <text x={x} y={y + 8} textAnchor="middle" fontSize="22" fill="#f2f2f2" fontFamily="Noto Sans">{t}</text>
        </g>
      ))}
      {tags.map(([x, y, t, r, c], i) => (
        <text key={i} transform={`translate(${x} ${y})${r ? " rotate(-90)" : ""}`} fontSize="23" fontWeight="300" fill={c} fontFamily={CAD_FONT}>{t}</text>
      ))}
      {dims.map(([x, y, t]) => (
        <text key={t} transform={`translate(${x} ${y}) rotate(-90)`} fontSize="22" fill="white" fontFamily="Noto Sans">{t}</text>
      ))}
      <path d="M567 919V894" stroke="#00f000" strokeWidth="5" />
      <path d="M560.500 896L567 882l6.500 14z" fill="#00f000" />
      <path d="M567 919h24" stroke="#f00000" strokeWidth="5" />
      <path d="M590 912.500L604 919l-14 6.500z" fill="#f00000" />
      <circle cx="567" cy="919" r="6.500" fill="#0000b8" />
      <text x="567" y="880" textAnchor="middle" fontSize="19" fill="#00e800" fontFamily={CAD_FONT}>Y</text>
      <text x="613" y="926" textAnchor="middle" fontSize="19" fill="#f00000" fontFamily={CAD_FONT}>X</text>
    </svg>
  );
}

function Palette() {
  return (
    <div className="absolute left-0 top-px w-[187px] border-2 border-[#275f99] bg-[#1c4672]">
      <div className="flex h-[14px] items-center justify-end border-b border-[#12304f] bg-[#173a5e] pr-[5px]">
        <button aria-label="关闭"><svg viewBox="0 0 8 8" className="h-2 w-2" aria-hidden="true"><path d="M1 1l6 6M7 1L1 7" stroke="#b8cde2" strokeWidth="1.500" /></svg></button>
      </div>
      <div className="flex flex-col gap-[7px] pb-[7px] pl-2 pr-[6px] pt-[7px] text-[#dbe7f3]">
        {["提取边线", "自动提取标注", "点选识别", "点选识别原位标注"].map((t, i) => (
          <div key={t} className="flex h-8 border-2 border-[#183d64] bg-[#205080]">
            <button className="flex-1 whitespace-nowrap">{t}</button>
            {i > 0 && <button aria-label={t + "选项"} className="flex w-[18px] items-center justify-center border-l border-[#183d64]"><Caret className="h-[6px] w-[9px]" color="white" /></button>}
          </div>
        ))}
      </div>
    </div>
  );
}

function Cube({ top = "white", front = "white", c = G, text }) {
  return (
    <svg viewBox="0 0 26 26" className="h-[26px] w-[26px]" aria-hidden="true">
      <path d="M1 6l5-5h19v18l-5 6H1z" fill={top} stroke={c} strokeWidth="1.400" strokeLinejoin="round" />
      <path d="M20 6l5-5v18l-5 6z" fill={front} stroke={c} strokeWidth="1.400" strokeLinejoin="round" />
      <rect x="1" y="6" width="19" height="19" rx="1" fill={front} stroke={c} strokeWidth="1.400" />
      {text && <text x="10.500" y="21" textAnchor="middle" fontSize="9" fontWeight="bold" fill={B} fontFamily="Noto Sans">3D</text>}
    </svg>
  );
}

function ViewBar() {
  return (
    <div className="absolute right-0 top-px flex w-[41px] flex-col items-center rounded-b bg-white pb-4 pr-[3px] pt-4">
      <button aria-label="动态观察">
        <svg viewBox="0 0 26 26" className="h-[26px] w-[26px]" fill="none" aria-hidden="true">
          <circle cx="13" cy="13" r="11.500" stroke={G} strokeWidth="1.400" />
          <path d="M6 19.500C-1 22-1 17 3 13 9 6 20 0 24.500 3c2 3-3 10-9 13-3 2-6 3-9.500 3.500" stroke={B} strokeWidth="1.400" />
        </svg>
      </button>
      <button aria-label="三维" className="mt-[9px]"><Cube text /></button>
      <button aria-label="俯视" className="mt-[10px] flex flex-col items-center gap-[9px]"><Cube top={L} /><Caret color={G} className="h-[5px] w-2" /></button>
      <button aria-label="着色" className="mt-[9px] flex flex-col items-center gap-[9px]"><Cube top={L} front={L} c={B} /><Caret color={G} className="h-[5px] w-2" /></button>
      <button aria-label="全屏" className="mt-[9px]">
        <svg viewBox="0 0 26 26" className="h-[26px] w-[26px]" fill="none" aria-hidden="true"><path d="M1 9V1h8M17 1h8v8M25 17v8h-8M9 25H1v-8" stroke={G} strokeWidth="1.500" /></svg>
      </button>
      <button aria-label="局部三维" className="mt-[10px]">
        <svg viewBox="0 0 26 26" className="h-[26px] w-[26px]" fill="none" aria-hidden="true">
          <rect x="1" y="1" width="24" height="24" rx="1.500" stroke={G} strokeWidth="1.400" strokeDasharray="3 1.600" />
          <path d="M13 5.500l7 4v7.500l-7 4-7-4V9.500zM6 9.500l7 4 7-4M13 13.500V21" stroke={B} strokeWidth="1.400" strokeLinejoin="round" />
        </svg>
      </button>
      <hr className="mt-2 w-7 border-[#4f586b]" />
      <button aria-label="显示列表" className="mt-2">
        <svg viewBox="0 0 26 26" className="h-[26px] w-[26px]" fill="none" aria-hidden="true">
          <path d="M13 25H2.500A1.500 1.500 0 0 1 1 23.500v-21A1.500 1.500 0 0 1 2.500 1h21A1.500 1.500 0 0 1 25 2.500V15M5 7h4M11 7h9M5 12h6M13 12h4M5 17h4" stroke={G} strokeWidth="1.300" />
          <path d="M14 21c3-5 9-5 11.500 0-2.500 5-8.500 5-11.500 0z" stroke={B} strokeWidth="1.200" fill="white" />
          <circle cx="20" cy="21" r="1.500" fill={B} />
        </svg>
      </button>
    </div>
  );
}

const fields = [
  ["名称", "LL18", "*"], ["类别", ["连梁"]], ["截面宽度(mm)", "", "*"], ["截面高度(mm)", "", "*"],
  ["上下部通长筋", ""], ["箍筋信息", ""], ["肢数", ""], ["梁侧面钢筋", ""], ["标高", ["层顶标高"]],
];

function Dialog() {
  return (
    <form role="dialog" aria-label="点选识别梁" className="absolute left-[501px] top-[224px] w-[326px] rounded-lg bg-[#e5e5e5] pb-[15px] pl-[14px] pr-[14px]" onSubmit={(e) => e.preventDefault()}>
      <div className="flex h-[49px] items-center justify-between pr-[2px]">
        <h2 className="text-[17px]">点选识别梁</h2>
        <button type="button" aria-label="关闭"><Close className="h-[14px] w-[14px]" /></button>
      </div>
      <div className="flex flex-col gap-[7px]">
        {fields.map(([k, v, star], i) => (
          <div key={k} className="flex items-center">
            <label htmlFor={"f" + i} className={"flex w-[116px] whitespace-nowrap pb-[2px] " + (k === "标高" ? "pl-[5px]" : "text-[#3c8cf0]")}>
              <span className="w-[7px] text-[#e23b3b]">{star}</span>{k}
            </label>
            {Array.isArray(v) ? (
              <div className="relative h-[30px] flex-1">
                <select id={"f" + i} className={"h-full w-full appearance-none rounded border border-[#ccd0d3] bg-white outline-none " + (k === "标高" ? "pl-2" : "pl-1")}>
                  {v.map((o) => <option key={o}>{o}</option>)}
                </select>
                <Caret className="pointer-events-none absolute right-[7px] top-[13px] h-1 w-[6px]" color="#444" />
              </div>
            ) : (
              <input id={"f" + i} defaultValue={v} className="h-7 min-w-0 flex-1 border border-[#c6cacd] bg-white pl-[3px] outline-none" />
            )}
          </div>
        ))}
      </div>
      <div className="mt-[13px] flex justify-end gap-[7px] pr-px">
        <button className="h-[33px] w-[98px] rounded bg-[#2d80e2] text-white">确定</button>
        <button type="button" className="h-[33px] w-[98px] rounded border border-[#d0d3d6] bg-white">取消</button>
      </div>
    </form>
  );
}

const tree = [
  [1, "所有构件"], [2, "施工段"], [3, "土方工程"], [3, "基础工程"], [3, "主体结构"], [3, "二次结构"], [3, "装饰装修"], [3, "其它土建"], [3, "钢筋工程"],
  [2, "轴线"], [3, "轴网"], [3, "辅助轴线"], [2, "柱"], [3, "柱"], [3, "构造柱"], [3, "砌体柱"], [3, "约束边..."],
  [2, "墙"], [3, "剪力墙"], [3, "人防门..."], [3, "砌体墙"], [3, "砌体加筋"], [3, "保温墙"],
];

const Fold = () => (
  <button aria-label="折叠" className="flex h-4 w-4 shrink-0 items-center justify-center rounded-sm border border-[#8a8a8a] bg-white">
    <span className="h-px w-[6px] bg-[#555]" />
  </button>
);

function RightPanel() {
  return (
    <aside className="flex w-[104px] shrink-0 flex-col overflow-hidden whitespace-nowrap border-b border-l border-[#cfcfcf] bg-white">
      <div className="h-[15px] shrink-0 border-b border-t border-[#dcdcdc] bg-[#e8e8e8]" />
      <h2 className="flex h-7 shrink-0 items-center border-b border-[#d8d8d8] bg-[#f2f2f2] pb-px pl-[10px] text-[#777]">显示设置</h2>
      <div className="flex h-[34px] shrink-0 items-end gap-1 border-b border-[#cfd2d4] pl-[3px]" role="tablist">
        <button role="tab" aria-selected="true" className="-mb-px h-[30px] w-[77px] shrink-0 rounded-t border border-b-0 border-[#b9c4d0] bg-white pb-[2px] text-[#2a82e8]">图元显示</button>
        <button role="tab" aria-selected="false" className="h-[27px] w-[77px] shrink-0 rounded-t bg-[#dedede]">楼层显示</button>
      </div>
      <div className="mb-[49px] ml-[3px] mt-[3px] flex min-h-0 w-[180px] flex-1 flex-col border border-[#cfcfcf]">
        <div className="flex h-[25px] shrink-0 items-center border-b border-[#d6d6d6] pl-8">图层构件</div>
        <div className="min-h-0 flex-1 overflow-hidden">
          <ul className="flex h-[calc(100%+5px)] flex-col">
            {tree.map(([lv, t], i) => {
              const last = lv === 3 && tree[i + 1] && tree[i + 1][0] === 2;
              return (
                <li key={i} className="flex min-h-0 flex-1 items-center border-b border-[#dcdcdc]">
                  {lv > 1 && <span className="w-[11px] shrink-0 self-stretch border-r border-[#dcdcdc]" />}
                  {lv === 1 && <span className="w-[3px]" />}
                  {lv === 2 && <span className="h-px w-1 bg-[#dcdcdc]" />}
                  {lv < 3 && <Fold />}
                  {lv === 3 && (
                    <>
                      <span className={"w-3 shrink-0 border-r border-[#dcdcdc] " + (last ? "h-1/2 self-start" : "self-stretch")} />
                      <span className="h-px w-5 shrink-0 bg-[#dcdcdc]" />
                    </>
                  )}
                  <span className="ml-[7px]">{t}</span>
                </li>
              );
            })}
          </ul>
        </div>
        <div className="flex h-[17px] shrink-0 items-center gap-1 pl-[6px]">
          <svg viewBox="0 0 5 10" className="h-[10px] w-[5px]" aria-hidden="true"><path d="M5 0v10L0 5z" fill="#555f70" /></svg>
          <div className="h-[10px] flex-1 rounded-full bg-[#cbcbcb]" />
        </div>
      </div>
    </aside>
  );
}

export default function App() {
  return (
    <div className="flex h-screen flex-col overflow-hidden bg-white font-['Noto_Sans','Noto_Sans_CJK_SC',sans-serif] text-[15px] leading-5 text-[#333]">
      <Header />
      <Ribbon />
      <div className="flex h-[33px] shrink-0 items-center gap-[5px] bg-[#f1f1f1] pl-[3px]">
        {["第31层", "梁", "连梁", "LL 18", "分层1"].map((t, i) => (
          <Pick key={i} label={"筛选" + (i + 1)} options={[t]} className="h-7 w-[123px]" />
        ))}
      </div>
      <main className="flex min-h-0 flex-1">
        <NavPanel />
        <div className="ml-[5px] flex w-[334px] shrink-0 flex-col">
          <ListPanel />
          <PropPanel />
        </div>
        <Splitter />
        <div className="relative min-w-0 flex-1 overflow-hidden bg-black">
          <div className="absolute inset-0"><Drawing /></div>
          <Palette />
          <ViewBar />
          <Dialog />
          <div className="absolute inset-x-0 bottom-0 flex h-[33px] items-center justify-center gap-[6px] bg-[#2d2d2d]/80 font-bold text-white">
            <svg viewBox="0 0 18 18" className="h-[18px] w-[18px]" fill="none" aria-hidden="true"><path d="M17 0l-6 7M11 2v5h5M1 17l6-6M2 11h5v6" stroke="white" strokeWidth="1.200" /></svg>
            <span>左键点选连梁标注&lt;右键确认/Esc放弃&gt;</span>
          </div>
        </div>
        <Splitter right />
        <RightPanel />
      </main>
      <footer className="flex h-[7px] shrink-0 items-end gap-[7px] overflow-hidden bg-[#fbfbfb] pl-[565px]">
        {["w-[30px]", "w-[44px] border-[#3d86dc] bg-[#cfe3fa]", "w-[30px]", "w-[44px]", "w-[44px]", "w-[30px]", "w-[30px]"].map((c, i) => (
          <button key={i} aria-label={"工具" + (i + 1)} className={"h-[3px] rounded-t border border-b-0 " + (i === 1 ? "" : "border-[#aaa] ") + c} />
        ))}
      </footer>
    </div>
  );
}
